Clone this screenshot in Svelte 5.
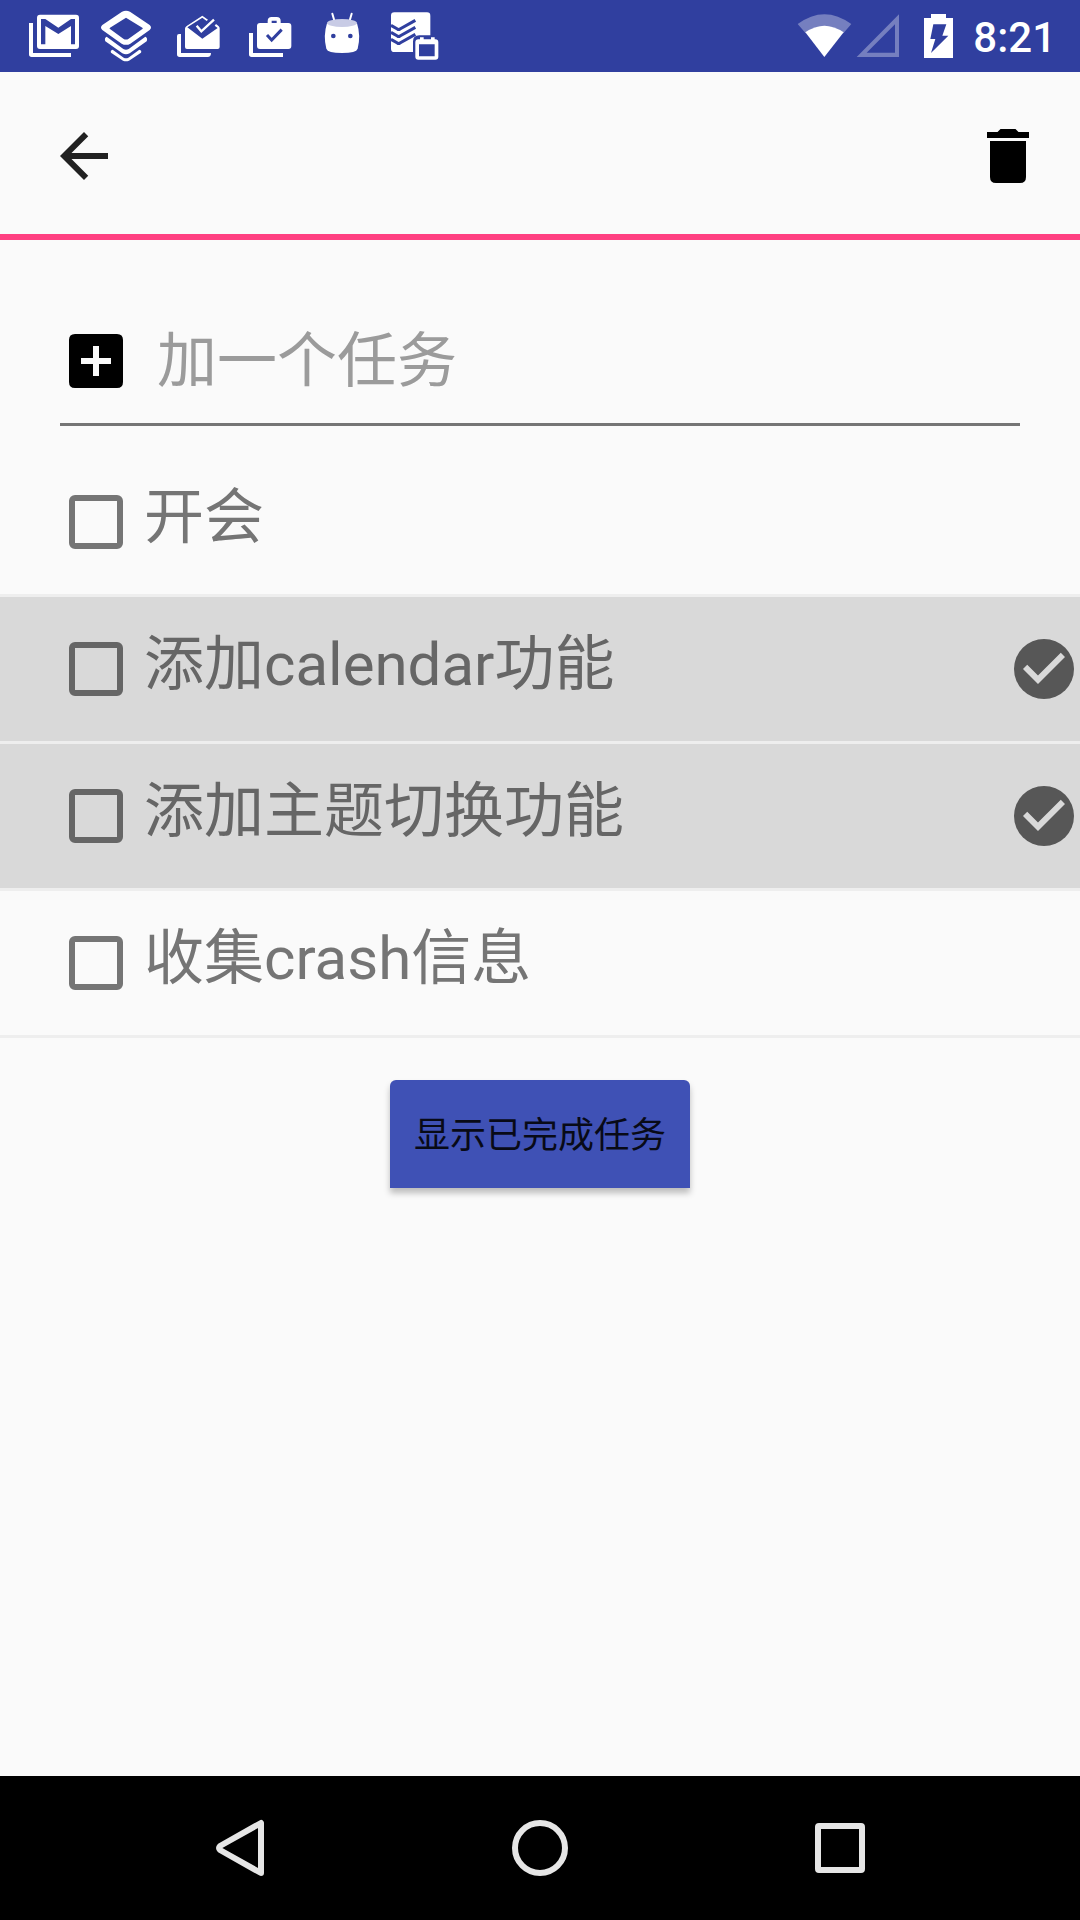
<script>
  let tasks = $state([
    { id: 1, title: '开会', done: false, selected: false },
    { id: 2, title: '添加calendar功能', done: false, selected: true },
    { id: 3, title: '添加主题切换功能', done: false, selected: true },
    { id: 4, title: '收集crash信息', done: false, selected: false }
  ]);
  let draft = $state('');

  function addTask(event) {
    event.preventDefault();
    const title = draft.trim();
    if (!title) return;
    tasks.push({ id: Date.now(), title, done: false, selected: false });
    draft = '';
  }

  function removeSelected() {
    tasks = tasks.filter((task) => !task.selected);
  }
</script>

<div class="screen">
  <div class="status">
    <div class="notices">
      <svg viewBox="54 0 216 216" aria-hidden="true">
        <path d="M87 69h12v90h114v12H95q-8 0-8-8z" />
        <rect x="111" y="44" width="126" height="103" rx="9" />
        <path class="cut" d="M123 57h13l39 26 38-26h12v76h-12V78l-38 24-39-24v55h-13z" />
      </svg>
      <svg viewBox="270 0 216 216" aria-hidden="true">
        <path fill-rule="evenodd" d="M366 35q12-5 24 0l59 40q8 7 0 15l-58 41q-13 7-26 0l-58-41q-8-8 0-15zM378 53l-48 30q-3 2 0 4l40 29q8 5 16 0l41-29q3-2 0-4z" />
        <path d="M320 110l50 37q8 5 16 0l50-37q8 4 4 14l-51 36q-11 6-22 0l-51-36q-4-10 4-14z" />
        <path d="M338 149l33 24q7 4 14 0l33-24q8 2 5 9l-36 24q-9 4-18 0l-36-24q-3-7 5-9z" />
      </svg>
      <svg viewBox="486 0 216 216" aria-hidden="true">
        <path d="M531 108q0-6 6-6h6v57h90q0 12-10 12h-84q-8 0-8-8z" />
        <path d="M555 86q0-5 5-8l47-31 17 12-4 4-13-10-45 29 45 34 46-32-9-7 4-5q11 7 11 13v56q0 6-6 6h-92q-6 0-6-6z" />
        <path d="M590 77l14 17 38-35" fill="none" stroke="#fff" stroke-width="7" />
      </svg>
      <svg viewBox="12 0 216 216" aria-hidden="true">
        <path d="M57 99h12v60h90v12H65q-8 0-8-8z" />
        <path fill-rule="evenodd" d="M90 69h23v-6q0-12 12-12h15q12 0 12 12v6h23q9 0 9 9v60q0 9-9 9H90q-9 0-9-9V78q0-9 9-9zM125 62v7h15v-7z" />
        <path class="line" d="M111 105l14 15 30-31" />
      </svg>
      <svg viewBox="228 0 216 216" aria-hidden="true">
        <path d="M307 41l7 24M365 41l-7 24" fill="none" stroke="#fff" stroke-width="6" stroke-linecap="round" />
        <path d="M291 70q45 16 90 0 12 37 2 76-4 13-47 13t-47-13q-10-39 2-76z" />
        <ellipse cx="336" cy="69" rx="45" ry="12" fill="#c8cbe5" />
        <circle class="cut" cx="310" cy="108" r="7" />
        <circle class="cut" cx="361" cy="108" r="7" />
      </svg>
      <svg viewBox="444 0 216 216" aria-hidden="true">
        <path d="M493 37h98q10 0 10 10v59h-33q-19 0-19 19v31h-56q-10 0-10-10V47q0-10 10-10z" />
        <path class="line" d="M483 76l19 11q4 3 8 0l46-26M483 97l19 11q4 3 8 0l46-26M483 118l19 11q4 3 8 0l46-26" />
        <path fill-rule="evenodd" d="M565 118h5v-6h11v6h22v-6h11v6h2q9 0 9 9v43q0 9-9 9h-51q-9 0-9-9v-43q0-9 9-9zM567 133v36h47v-36z" />
      </svg>
    </div>
    <svg class="wifi" viewBox="36 0 180 216" aria-hidden="true">
      <path class="dim" d="M50 72q80-59 161 0l-24 28q-56-44-113 0z" />
      <path d="M73 97q57-40 115 0l-58 74z" />
    </svg>
    <svg class="signal" viewBox="216 0 198 216" aria-hidden="true">
      <path class="dim" fill-rule="evenodd" d="M354 43v128H227zM342 73l-85 85h85z" />
    </svg>
    <svg class="battery" viewBox="414 0 108 216" aria-hidden="true">
      <path d="M450 42h45v12h21v120h-87V54h21z" />
      <path class="cut" d="M457 73h39l-12 34h18l-52 52 13-42h-15z" />
    </svg>
    <time class="clock">8:21</time>
  </div>

  <header class="toolbar">
    <button class="icon" aria-label="返回">
      <svg viewBox="0 0 24 24" fill="#212121"><path d="M20 11H7.83l5.59-5.59L12 4l-8 8 8 8 1.41-1.41L7.83 13H20v-2z" /></svg>
    </button>
    <button class="icon" aria-label="删除" onclick={removeSelected}>
      <svg viewBox="0 0 24 24"><path d="M6 19q0 2 2 2h8q2 0 2-2V7H6zM19 4h-3.5l-1-1h-5l-1 1H5v2h14z" /></svg>
    </button>
  </header>

  <main>
    <form class="add" onsubmit={addTask}>
      <button class="icon" aria-label="添加">
        <svg viewBox="0 0 24 24"><path fill-rule="evenodd" d="M19 3H5q-2 0-2 2v14q0 2 2 2h14q2 0 2-2V5q0-2-2-2zm-2 10h-4v4h-2v-4H7v-2h4V7h2v4h4z" /></svg>
      </button>
      <input type="text" bind:value={draft} placeholder="加一个任务" aria-label="加一个任务" />
    </form>

    <ul>
      {#each tasks as task (task.id)}
        <li class:selected={task.selected}>
          <label>
            <input type="checkbox" bind:checked={task.done} />
            <span>{task.title}</span>
          </label>
          {#if task.selected}
            <svg class="mark" viewBox="0 0 24 24" aria-hidden="true">
              <circle cx="12" cy="12" r="10" fill="#575757" />
              <path d="M10 17l-5-5 1.41-1.41L10 14.17l7.59-7.59L19 8z" fill="#d9d9d9" />
            </svg>
          {/if}
        </li>
      {/each}
    </ul>

    <button class="completed">显示已完成任务</button>
  </main>

  <nav>
    <button aria-label="后退">
      <svg viewBox="0 0 72 72"><path d="M57 11v50L16 38q-2-2 0-4z" /></svg>
    </button>
    <button aria-label="主屏幕">
      <svg viewBox="0 0 72 72"><circle cx="36" cy="36" r="25" /></svg>
    </button>
    <button aria-label="最近任务">
      <svg viewBox="0 0 72 72"><rect x="14" y="14" width="44" height="44" rx="1" /></svg>
    </button>
  </nav>
</div>

<style>
  :global(body) {
    margin: 0;
    background: #fafafa;
  }
  .screen {
    display: flex;
    flex-direction: column;
    min-height: 100vh;
    background: #fafafa;
    font-family: Roboto, 'Noto Sans CJK SC', sans-serif;
  }
  button {
    padding: 0;
    border: 0;
    background: none;
    font-family: inherit;
    cursor: pointer;
  }
  svg {
    display: block;
    flex: none;
    width: 72px;
    height: 72px;
  }

  .status {
    display: flex;
    align-items: center;
    height: 72px;
    padding: 0 24px 0 18px;
    background: #303f9f;
    color: #fff;
    fill: #fff;
  }
  .notices {
    display: flex;
    flex: 1;
  }
  .cut {
    fill: #303f9f;
  }
  .line {
    fill: none;
    stroke: #303f9f;
    stroke-width: 9;
  }
  .dim {
    fill: #757fbf;
  }
  .wifi {
    width: 60px;
  }
  .signal {
    width: 66px;
  }
  .battery {
    width: 36px;
  }
  .clock {
    margin-left: 18px;
    padding-top: 4px;
    font-size: 42px;
    font-weight: 500;
    line-height: 68px;
  }

  .toolbar {
    display: flex;
    justify-content: space-between;
    align-items: center;
    box-sizing: border-box;
    height: 168px;
    padding: 6px 36px 0 48px;
    border-bottom: 6px solid #ff4081;
  }

  main {
    flex: 1;
    display: flex;
    flex-direction: column;
  }
  .add {
    display: flex;
    align-items: center;
    gap: 25px;
    height: 122px;
    margin: 60px 60px 24px;
    padding-bottom: 1px;
    border-bottom: 3px solid #757575;
  }
  .add input {
    flex: 1;
    min-width: 0;
    height: 90px;
    padding: 0;
    border: 0;
    outline: 0;
    background: none;
    color: #212121;
    font-family: inherit;
    font-size: 60px;
  }
  .add input::placeholder {
    color: #9b9b9b;
    opacity: 1;
  }

  ul {
    margin: 0;
    padding: 0;
    list-style: none;
  }
  li {
    display: flex;
    align-items: center;
    min-height: 144px;
    padding-left: 69px;
    border-bottom: 3px solid #eee;
    color: #757575;
  }
  li.selected {
    background: #d9d9d9;
    color: #666;
  }
  label {
    flex: 1;
    display: flex;
    align-items: center;
    gap: 21px;
  }
  label input {
    appearance: none;
    flex: none;
    box-sizing: border-box;
    width: 54px;
    height: 54px;
    margin: 0;
    border: 6px solid currentColor;
    border-radius: 6px;
    color: inherit;
  }
  label input:checked {
    background: currentColor;
  }
  label span {
    padding-bottom: 8px;
    font-size: 60px;
    line-height: 72px;
  }

  .completed {
    align-self: center;
    box-sizing: border-box;
    min-width: 300px;
    height: 108px;
    margin: 42px 0;
    padding: 0 24px 4px;
    border-radius: 6px 6px 0 0;
    background: #3f51b5;
    box-shadow: 0 5px 6px rgba(0, 0, 0, 0.25);
    color: #080a17;
    font-size: 36px;
  }

  nav {
    display: flex;
    height: 144px;
    padding: 0 90px;
    background: #000;
  }
  nav button {
    flex: 1;
    display: flex;
    align-items: center;
    justify-content: center;
  }
  nav svg {
    fill: none;
    stroke: #e6e6e6;
    stroke-width: 6;
    stroke-linejoin: round;
  }
</style>
